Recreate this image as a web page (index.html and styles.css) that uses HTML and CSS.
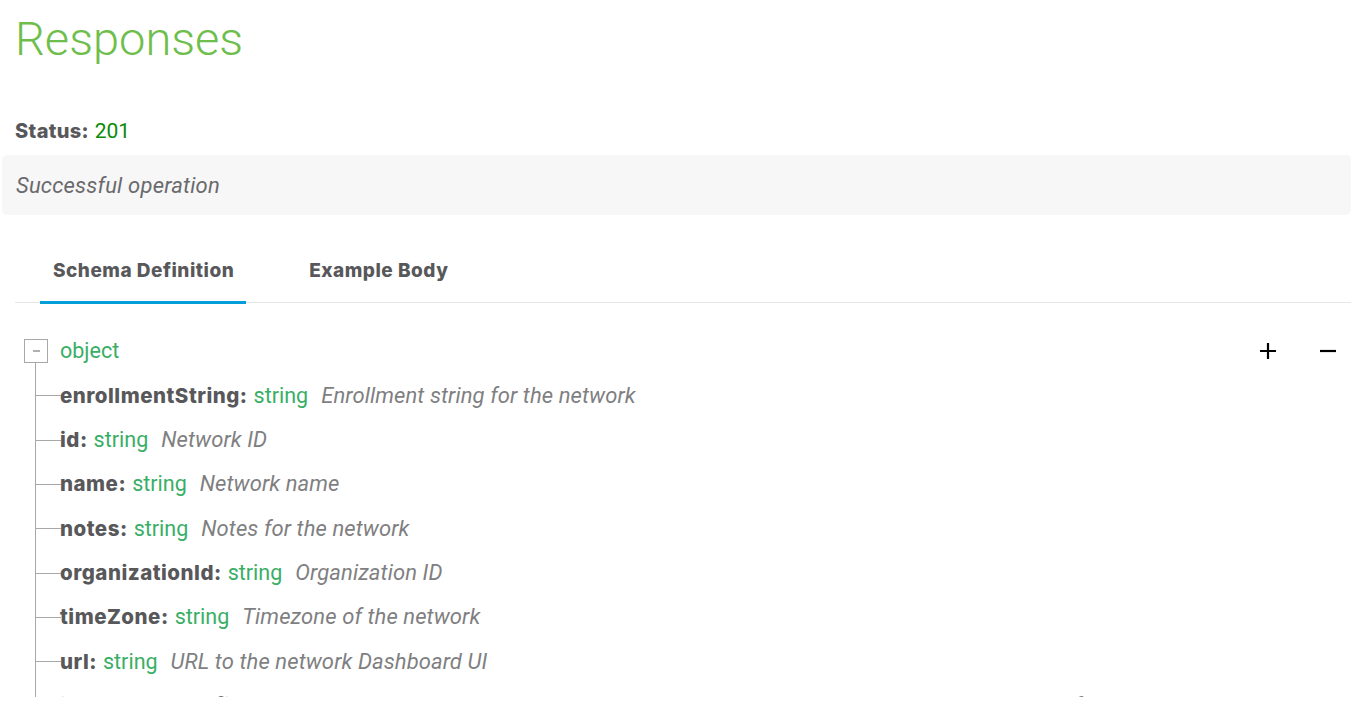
FILE: index.html
```html
<!DOCTYPE html>
<html lang="en">
<head>
<meta charset="utf-8">
<title>Responses</title>
<link rel="stylesheet" href="styles.css">
</head>
<body>
<div class="page">
  <h1 class="title">Responses</h1>
  <div class="status"><span class="status-label">Status:</span> <span class="status-code">201</span></div>
  <div class="status-desc">Successful operation</div>

  <div class="tabs">
    <div class="tab active">Schema Definition</div>
    <div class="tab">Example Body</div>
  </div>

  <div class="schema">
    <div class="schema-head">
      <div class="root">
        <span class="toggle"><span class="toggle-bar"></span></span>
        <span class="type">object</span>
      </div>
      <div class="expanders">
        <svg class="icon" width="18" height="18" viewBox="0 0 18 18"><path d="M9 1v16M1 9h16" stroke="#000" stroke-width="2.2" fill="none"/></svg>
        <svg class="icon" width="18" height="18" viewBox="0 0 18 18"><path d="M1 9h16" stroke="#000" stroke-width="2.2" fill="none"/></svg>
      </div>
    </div>
    <div class="children">
      <div class="prop"><span class="key">enrollmentString:</span><span class="type">string</span><span class="desc">Enrollment string for the network</span></div>
      <div class="prop"><span class="key">id:</span><span class="type">string</span><span class="desc">Network ID</span></div>
      <div class="prop"><span class="key">name:</span><span class="type">string</span><span class="desc">Network name</span></div>
      <div class="prop"><span class="key">notes:</span><span class="type">string</span><span class="desc">Notes for the network</span></div>
      <div class="prop"><span class="key">organizationId:</span><span class="type">string</span><span class="desc">Organization ID</span></div>
      <div class="prop"><span class="key">timeZone:</span><span class="type">string</span><span class="desc">Timezone of the network</span></div>
      <div class="prop"><span class="key">url:</span><span class="type">string</span><span class="desc">URL to the network Dashboard UI</span></div>
      <div class="prop"><span class="key">isBoundToConfigTemplate:</span><span class="type">boolean</span><span class="desc">A boolean indicating whether or not the network is bound to a configuration template</span></div>
    </div>
  </div>
</div>
</body>
</html>
```

FILE: styles.css
```css
html, body {
  margin: 0;
  padding: 0;
  background: #fff;
}

body {
  font-family: Inter, "Liberation Sans", sans-serif;
  color: #58585b;
}

.page {
  height: 697px;
  overflow: hidden;
  padding-right: 14px;
}

.title {
  margin: 0;
  padding: 12px 0 0 15px;
  font-family: Roboto, "Liberation Sans", sans-serif;
  font-weight: 300;
  font-size: 47px;
  line-height: 54px;
  color: #6ebe4c;
}

.status {
  margin: 53px 0 0 15px;
  font-size: 20px;
  line-height: 24px;
}

.status-label {
  font-weight: 800;
  letter-spacing: 0.35px;
  color: #58585b;
}

.status-code {
  font-family: Roboto, "Liberation Sans", sans-serif;
  font-size: 21px;
  color: #088a08;
}

.status-desc {
  margin: 12px 0 0 2px;
  height: 60px;
  box-sizing: border-box;
  padding: 0 14px;
  display: flex;
  align-items: center;
  background: #f7f7f7;
  border-radius: 5px;
  font-style: italic;
  font-size: 22px;
  letter-spacing: 0.2px;
  color: #6a6a6d;
  font-family: Roboto, "Liberation Sans", sans-serif;
}

.tabs {
  display: flex;
  margin: 34px 0 0 15px;
  border-bottom: 1px solid #e6e6e6;
  height: 53px;
  gap: 50px;
  padding-left: 25px;
}

.tab {
  font-weight: 800;
  font-size: 19px;
  line-height: 24px;
  letter-spacing: 0.5px;
  color: #58585b;
  padding: 10px 13px 0;
  height: 53px;
  box-sizing: border-box;
}

.tab.active {
  border-bottom: 3px solid #049fd9;
  height: 55px;
  margin-bottom: -2px;
  padding-left: 13px;
  padding-right: 12px;
}

.schema {
  margin: 36px 0 0 24px;
}

.schema-head {
  display: flex;
  justify-content: space-between;
  align-items: center;
  height: 24px;
}

.root {
  display: flex;
  align-items: center;
  gap: 12px;
}

.toggle {
  width: 24px;
  height: 24px;
  box-sizing: border-box;
  border: 1px solid #a8a8a8;
  display: flex;
  align-items: center;
  justify-content: center;
}

.toggle-bar {
  width: 7px;
  height: 2px;
  background: #b0b0b0;
}

.type {
  color: #39ae66;
  font-family: Roboto, "Liberation Sans", sans-serif;
  font-size: 21.5px;
}

.root .type {
  margin-top: -2px;
}

.expanders {
  display: flex;
  gap: 42px;
  margin-right: 14px;
}

.icon {
  display: block;
}

.children {
  margin-left: 11px;
  border-left: 1px solid #a8a8a8;
  padding-top: 10px;
}

.prop {
  position: relative;
  height: 44.35px;
  display: flex;
  align-items: center;
  padding-left: 24px;
  white-space: nowrap;
}

.prop::before {
  content: "";
  position: absolute;
  left: 0;
  top: 50%;
  width: 25px;
  height: 1px;
  background: #a8a8a8;
}

.key {
  font-weight: 800;
  font-size: 20.5px;
  letter-spacing: 0.5px;
  color: #58585b;
  margin-right: 6px;
}

.desc {
  margin-left: 13px;
  font-style: italic;
  font-family: Roboto, "Liberation Sans", sans-serif;
  font-size: 22px;
  letter-spacing: 0.1px;
  color: #7f7f82;
}
```
